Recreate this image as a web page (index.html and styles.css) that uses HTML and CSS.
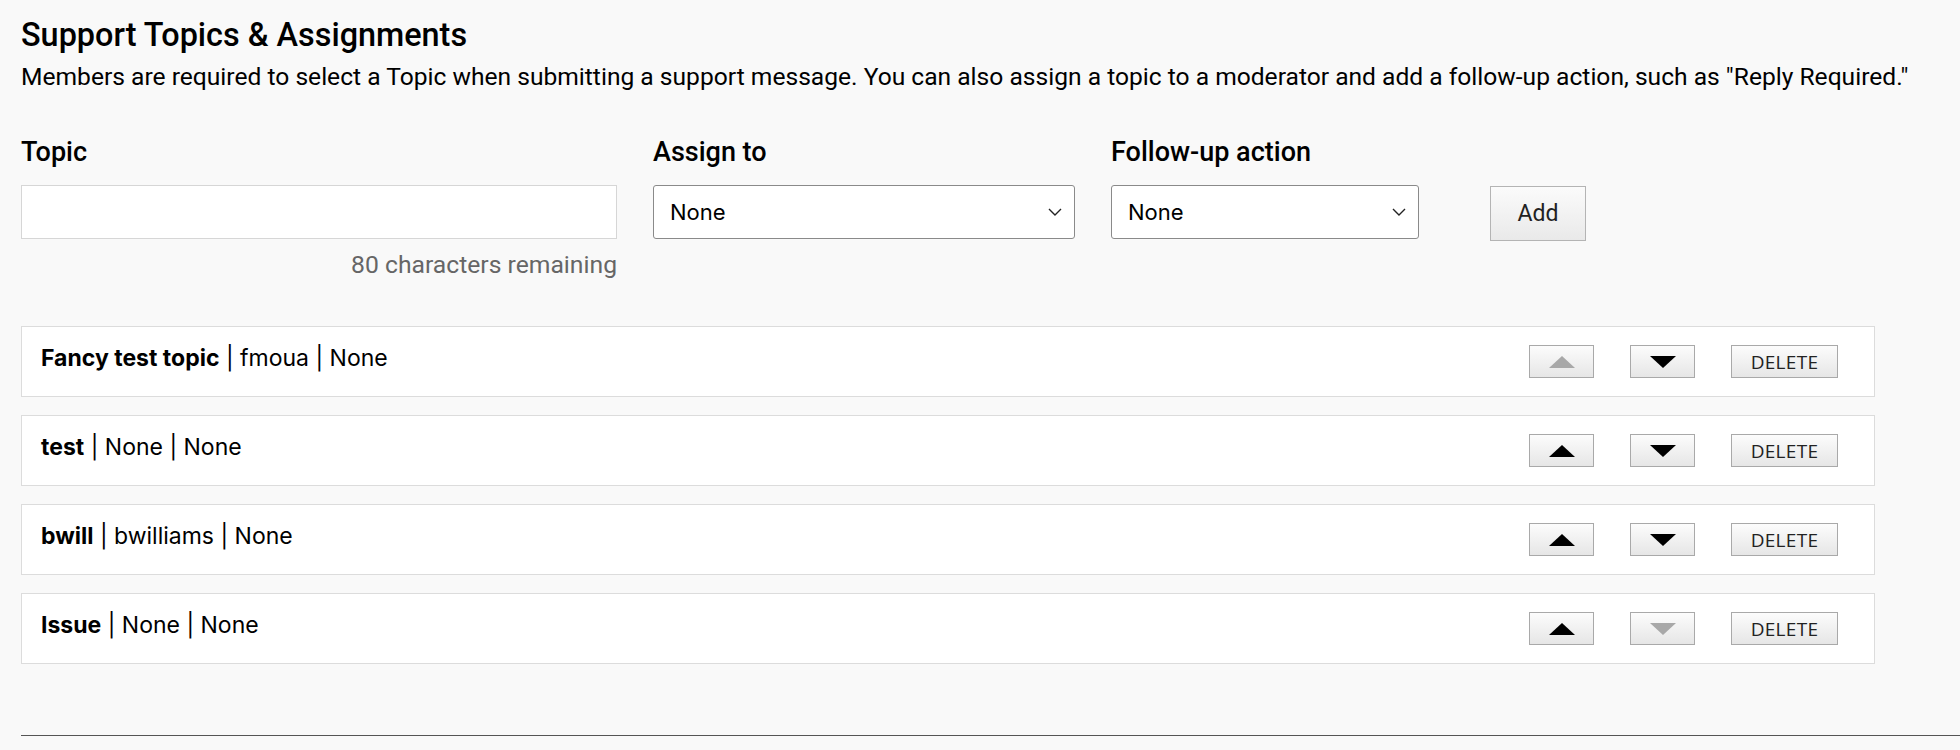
FILE: index.html
```html
<!DOCTYPE html>
<html lang="en">
<head>
<meta charset="utf-8">
<title>Support Topics &amp; Assignments</title>
<link rel="stylesheet" href="styles.css">
</head>
<body>
<main class="page">
  <h1 class="title">Support Topics &amp; Assignments</h1>
  <p class="intro">Members are required to select a Topic when submitting a support message. You can also assign a topic to a moderator and add a follow-up action, such as "Reply Required."</p>

  <form class="topic-form">
    <label class="field-label" for="topic">Topic</label>
    <label class="field-label" for="assign">Assign to</label>
    <label class="field-label" for="follow">Follow-up action</label>
    <span></span>

    <input class="text-input" id="topic" type="text" maxlength="80">
    <div class="select-wrap">
      <select id="assign" class="select"><option>None</option></select>
      <svg class="chevron" viewBox="0 0 14 8" width="14" height="8"><polyline points="1,1 7,7 13,1" fill="none" stroke="#222" stroke-width="1.4"/></svg>
    </div>
    <div class="select-wrap">
      <select id="follow" class="select"><option>None</option></select>
      <svg class="chevron" viewBox="0 0 14 8" width="14" height="8"><polyline points="1,1 7,7 13,1" fill="none" stroke="#222" stroke-width="1.4"/></svg>
    </div>
    <button type="button" class="add-btn">Add</button>

    <span class="remaining">80 characters remaining</span>
  </form>

  <ul class="topic-list">
    <li class="topic-row">
      <div class="topic-text"><strong>Fancy test topic</strong> | fmoua | None</div>
      <div class="row-actions">
        <button type="button" class="move-btn" disabled><svg viewBox="0 0 26 12" width="26" height="12"><polygon points="0,12 13,0 26,12" class="tri off"/></svg></button>
        <button type="button" class="move-btn"><svg viewBox="0 0 26 12" width="26" height="12"><polygon points="0,0 26,0 13,12" class="tri"/></svg></button>
        <button type="button" class="delete-btn">DELETE</button>
      </div>
    </li>
    <li class="topic-row">
      <div class="topic-text"><strong>test</strong> | None | None</div>
      <div class="row-actions">
        <button type="button" class="move-btn"><svg viewBox="0 0 26 12" width="26" height="12"><polygon points="0,12 13,0 26,12" class="tri"/></svg></button>
        <button type="button" class="move-btn"><svg viewBox="0 0 26 12" width="26" height="12"><polygon points="0,0 26,0 13,12" class="tri"/></svg></button>
        <button type="button" class="delete-btn">DELETE</button>
      </div>
    </li>
    <li class="topic-row">
      <div class="topic-text"><strong>bwill</strong> | bwilliams | None</div>
      <div class="row-actions">
        <button type="button" class="move-btn"><svg viewBox="0 0 26 12" width="26" height="12"><polygon points="0,12 13,0 26,12" class="tri"/></svg></button>
        <button type="button" class="move-btn"><svg viewBox="0 0 26 12" width="26" height="12"><polygon points="0,0 26,0 13,12" class="tri"/></svg></button>
        <button type="button" class="delete-btn">DELETE</button>
      </div>
    </li>
    <li class="topic-row">
      <div class="topic-text"><strong>Issue</strong> | None | None</div>
      <div class="row-actions">
        <button type="button" class="move-btn"><svg viewBox="0 0 26 12" width="26" height="12"><polygon points="0,12 13,0 26,12" class="tri"/></svg></button>
        <button type="button" class="move-btn" disabled><svg viewBox="0 0 26 12" width="26" height="12"><polygon points="0,0 26,0 13,12" class="tri off"/></svg></button>
        <button type="button" class="delete-btn">DELETE</button>
      </div>
    </li>
  </ul>

  <hr class="divider">
</main>
</body>
</html>
```

FILE: styles.css
```css
* { box-sizing: border-box; }

html, body {
  margin: 0;
  padding: 0;
  background: #f9f9f9;
  color: #000;
}

.page {
  padding: 16px 0 0 21px;
  font-family: Roboto, "Liberation Sans", sans-serif;
}

.title {
  margin: 0;
  font-size: 32.4px;
  line-height: 38px;
  font-weight: 500;
}

.intro {
  margin: 7px 0 0;
  font-size: 24.6px;
  line-height: 32px;
  font-weight: 400;
}

.topic-form {
  display: grid;
  grid-template-columns: 596px 422px 308px auto;
  column-gap: 36px;
  margin-top: 42px;
  align-items: start;
}

.field-label {
  font-size: 27px;
  line-height: 34px;
  font-weight: 500;
  margin-bottom: 16px;
}

.text-input {
  height: 54px;
  width: 100%;
  border: 1px solid #d6d6d6;
  background: #fff;
  border-radius: 0;
  font-size: 22px;
  padding: 0 14px;
  outline: none;
}

.select-wrap {
  position: relative;
  height: 54px;
}

.select {
  appearance: none;
  -webkit-appearance: none;
  width: 100%;
  height: 54px;
  border: 1px solid #8a8a8a;
  border-radius: 3px;
  background: #fff;
  font-family: Inter, "Noto Sans", sans-serif;
  font-size: 22px;
  color: #000;
  padding: 0 40px 0 16px;
}

.chevron {
  position: absolute;
  right: 13px;
  top: 23px;
  pointer-events: none;
}

.add-btn {
  justify-self: start;
  margin-left: 35px;
  margin-top: 1px;
  width: 96px;
  height: 55px;
  border: 1px solid #b4b4b4;
  border-radius: 0;
  background: linear-gradient(#fbfbfb, #e9e9e9);
  font-family: Roboto, "Liberation Sans", sans-serif;
  font-size: 23px;
  color: #222;
}

.remaining {
  grid-column: 1;
  justify-self: end;
  margin-top: 9px;
  font-size: 24.7px;
  line-height: 30px;
  color: #666;
}

.topic-list {
  list-style: none;
  margin: 46px 0 0;
  padding: 0;
  width: 1854px;
  display: flex;
  flex-direction: column;
  gap: 18px;
}

.topic-row {
  display: flex;
  align-items: center;
  justify-content: space-between;
  height: 71px;
  padding: 0 36px 0 19px;
  background: #fff;
  border: 1px solid #dcdcdc;
}

.topic-text {
  align-self: flex-start;
  padding-top: 15px;
  font-family: Inter, "Liberation Sans", sans-serif;
  font-size: 23px;
  line-height: 33px;
  color: #000;
}

.topic-text strong { font-weight: 700; }

.row-actions {
  display: flex;
  gap: 36px;
}

.move-btn, .delete-btn {
  height: 33px;
  border: 1px solid #a9a9a9;
  border-radius: 0;
  background: linear-gradient(#fcfcfc, #e6e6e6);
  padding: 0;
  display: flex;
  align-items: center;
  justify-content: center;
}

.move-btn { width: 65px; }

.delete-btn {
  width: 107px;
  font-family: "Open Sans", "DejaVu Sans", sans-serif;
  font-size: 19px;
  letter-spacing: 0.3px;
  color: #222;
}

.tri { fill: #000; }
.tri.off { fill: #a8a8a8; }

.divider {
  margin: 71px 0 0;
  border: 0;
  border-top: 1px solid #555;
}
```
